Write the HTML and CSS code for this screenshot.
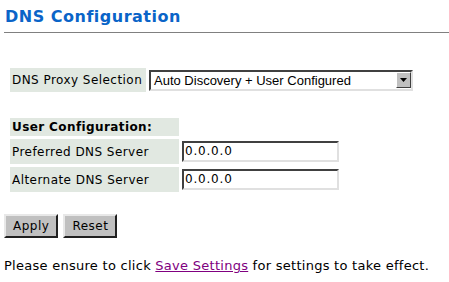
FILE: index.html
```html
<!DOCTYPE html>
<html>
<head>
<meta charset="utf-8">
<link rel="stylesheet" href="styles.css">
</head>
<body>
<h1 class="title">DNS Configuration</h1>
<div class="rule"></div>
<table class="proxy">
  <tr>
    <td class="label">DNS Proxy Selection</td>
    <td class="field">
      <div class="select">
        <span class="select-text">Auto Discovery + User Configured</span>
        <span class="select-btn"><svg width="7" height="4" viewBox="0 0 7 4"><path d="M0 0H7L3.5 4Z" fill="#000"/></svg></span>
      </div>
    </td>
  </tr>
</table>
<table class="user">
  <tr>
    <td class="label head">User Configuration:</td>
    <td></td>
  </tr>
  <tr>
    <td class="label row">Preferred DNS Server</td>
    <td class="field"><div class="input">0.0.0.0</div></td>
  </tr>
  <tr>
    <td class="label row">Alternate DNS Server</td>
    <td class="field"><div class="input">0.0.0.0</div></td>
  </tr>
</table>
<div class="buttons">
  <button class="btn">Apply</button>
  <button class="btn">Reset</button>
</div>
<p class="note">Please ensure to click <a href="#" class="link">Save Settings</a> for settings to take effect.</p>
</body>
</html>
```

FILE: styles.css
```css
html, body {
  margin: 0;
  padding: 0;
  background: #fff;
}
body {
  padding: 0 0 0 4px;
  font-family: "DejaVu Sans", Verdana, sans-serif;
  font-size: 12px;
  letter-spacing: 0.45px;
  color: #000;
}
.title {
  margin: 0;
  padding: 7px 0 0 1px;
  height: 26px;
  box-sizing: border-box;
  font-size: 16px;
  line-height: 19px;
  letter-spacing: 0.5px;
  font-weight: bold;
  color: #0a64c8;
}
.rule {
  height: 1px;
  background: #808080;
  margin-top: 6px;
}
table {
  border-collapse: separate;
  border-spacing: 0;
}
.proxy {
  margin: 35px 0 0 6px;
}
.label {
  background: #e1e8e1;
  padding: 0 0 0 2px;
  white-space: nowrap;
}
.proxy .label {
  height: 24px;
  width: 134px;
}
.proxy .field {
  padding-left: 3px;
}
.select {
  width: 264px;
  height: 21px;
  box-sizing: border-box;
  border: 2px solid;
  border-color: #404040 #e0e0e0 #e0e0e0 #404040;
  display: flex;
  align-items: center;
  background: #fff;
}
.select-text {
  flex: 1;
  font-family: "Liberation Sans", Arial, sans-serif;
  font-size: 13px;
  letter-spacing: 0;
  padding-left: 3px;
}
.select-btn {
  width: 15px;
  height: 16px;
  background: #c0c0c0;
  border: 1px solid;
  border-color: #fff #404040 #404040 #fff;
  box-sizing: border-box;
  display: flex;
  align-items: center;
  justify-content: center;
}
.user {
  margin: 23px 0 0 6px;
  border-spacing: 0 3px;
}
.user .head {
  font-weight: bold;
  letter-spacing: 0.4px;
  height: 18px;
  width: 167px;
}
.user .row {
  height: 25px;
}
.user .field {
  padding-left: 3px;
}
.input {
  width: 157px;
  height: 21px;
  box-sizing: border-box;
  border: 2px solid;
  border-color: #404040 #e0e0e0 #e0e0e0 #404040;
  padding-left: 1px;
  line-height: 17px;
  letter-spacing: 0.8px;
}
.buttons {
  margin-top: 19px;
  display: flex;
  gap: 5px;
}
.btn {
  font-family: "DejaVu Sans", Verdana, sans-serif;
  font-size: 12px;
  letter-spacing: 0.5px;
  height: 24px;
  padding: 0 7px;
  background: #c0c0c0;
  border: 2px solid;
  border-color: #e8e8e8 #202020 #202020 #e8e8e8;
  color: #000;
}
.note {
  margin: 21px 0 0 0;
  font-size: 13px;
  letter-spacing: 0.27px;
  line-height: 14px;
}
.link {
  color: #800080;
}
```
